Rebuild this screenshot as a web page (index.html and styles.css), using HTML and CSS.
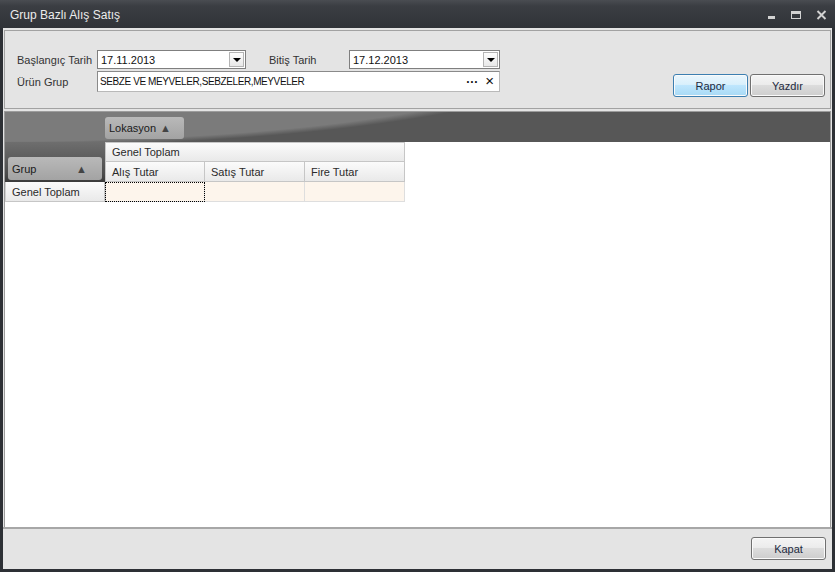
FILE: index.html
```html
<!DOCTYPE html>
<html lang="tr">
<head>
    <meta charset="UTF-8">
    <title>Grup Bazlı Alış Satış</title>
    <link rel="stylesheet" href="styles.css">
</head>
<body>

    <div class="window">

        <div class="titlebar">
            <span class="title">Grup Bazlı Alış Satış</span>
            <div class="controls">
                <svg width="10" height="10" viewBox="0 0 10 10"><rect x="2" y="6" width="7" height="3" fill="#d2d2d2"/></svg>
                <svg width="12" height="10" viewBox="0 0 12 10"><rect x="1.5" y="1.5" width="9" height="7" fill="none" stroke="#d2d2d2"/><rect x="1" y="1" width="10" height="3" fill="#d2d2d2"/></svg>
                <svg width="11" height="10" viewBox="0 0 11 10"><path d="M1.5 1 L9.5 9 M9.5 1 L1.5 9" stroke="#d2d2d2" stroke-width="1.9"/></svg>
            </div>
        </div>

        <div class="client">

            <div class="filter">
                <div class="fields">
                    <label>Başlangıç Tarih</label>
                    <div class="combo"><span>17.11.2013</span><span class="drop"></span></div>
                    <span></span>
                    <label>Bitiş Tarih</label>
                    <div class="combo"><span>17.12.2013</span><span class="drop"></span></div>

                    <label>Ürün Grup</label>
                    <div class="picker">
                        <span class="picker_text">SEBZE VE MEYVELER,SEBZELER,MEYVELER</span>
                        <span class="picker_btns"><span class="dots">···</span><span class="clear">×</span></span>
                    </div>
                </div>
                <div class="actions">
                    <button class="btn btn_blue">Rapor</button>
                    <button class="btn">Yazdır</button>
                </div>
            </div>

            <div class="pivot">
                <div class="band">
                    <div class="field_btn lokasyon">Lokasyon <span class="arrow">▲</span></div>
                </div>
                <div class="pivot_grid">
                    <div class="row_area">
                        <div class="field_btn grup">Grup <span class="arrow">▲</span></div>
                    </div>
                    <div class="hcell span3">Genel Toplam</div>
                    <div class="hcell">Alış Tutar</div>
                    <div class="hcell">Satış Tutar</div>
                    <div class="hcell">Fire Tutar</div>
                    <div class="hcell rowhead">Genel Toplam</div>
                    <div class="dcell focus"></div>
                    <div class="dcell"></div>
                    <div class="dcell"></div>
                </div>
            </div>

            <div class="footer">
                <button class="btn">Kapat</button>
            </div>

        </div>
    </div>

</body>
</html>
```

FILE: styles.css
```css
body{
    margin: 0;
    background-color: #2d3035;
    font-family: "Liberation Sans", Arial, sans-serif;
    font-size: 11px;
    color: #2a2a2a;
}

.window{
    width: 835px;
    height: 572px;
    box-sizing: border-box;
    padding: 0 3px 3px 3px;
    display: flex;
    flex-direction: column;
    background: linear-gradient(#4a4d52 0, #3b3e43 6px, #303338 28px, #2d3035 29px);
}

.titlebar{
    height: 28px;
    display: flex;
    align-items: center;
    justify-content: space-between;
}

.title{
    color: #ececec;
    font-size: 12px;
    margin-left: 7px;
    margin-top: 2px;
}

.controls{
    display: flex;
    gap: 14px;
    margin-right: 5px;
    margin-top: 1px;
}

.client{
    flex: 1;
    background-color: #e4e4e4;
    display: flex;
    flex-direction: column;
}

/* filter panel */

.filter{
    height: 79px;
    box-sizing: border-box;
    margin: 2px 1px 0 1px;
    border: 1px solid #a2a2a2;
    padding: 19px 5px 0 12px;
    display: flex;
    justify-content: space-between;
}

.fields{
    display: grid;
    grid-template-columns: 80px 149px 23px 80px 151px;
    grid-template-rows: 19px 21px;
    row-gap: 2px;
    align-items: center;
}

.fields label{
    color: #333;
}

.combo{
    height: 19px;
    box-sizing: border-box;
    border: 1px solid #7f7f7f;
    background-color: white;
    display: flex;
    align-items: center;
    justify-content: space-between;
    padding-left: 3px;
    color: #111;
}

.drop{
    width: 15px;
    height: 15px;
    margin-right: 1px;
    box-sizing: border-box;
    border: 1px solid #b4b4b4;
    background: linear-gradient(#fdfdfd, #e8e8e8);
    position: relative;
}

.drop::after{
    content: "";
    position: absolute;
    left: 3px;
    top: 5px;
    border-left: 4px solid transparent;
    border-right: 4px solid transparent;
    border-top: 4px solid #000;
}

.picker{
    grid-column: 2 / 6;
    height: 21px;
    box-sizing: border-box;
    border: 1px solid #b9b9b9;
    border-left-color: #8a8a8a;
    border-top-color: #8a8a8a;
    background-color: white;
    display: flex;
    align-items: center;
    justify-content: space-between;
    padding-left: 2px;
    color: #111;
}

.picker_text{
    font-size: 10px;
    letter-spacing: -0.4px;
    margin-top: -1px;
}

.picker_btns{
    display: flex;
    gap: 7px;
    margin-right: 5px;
    align-items: center;
}

.dots{
    font-weight: bold;
    font-size: 12px;
}

.clear{
    font-size: 15px;
    line-height: 12px;
    margin-top: -2px;
}

.actions{
    display: flex;
    gap: 2px;
    margin-top: 24px;
}

.btn{
    width: 75px;
    height: 23px;
    border: 1px solid #707070;
    border-radius: 3px;
    background: linear-gradient(#f4f4f4 0%, #ececec 45%, #dcdcdc 50%, #cdcdcd 100%);
    box-shadow: inset 0 0 0 1px #fafafa;
    font-family: "Liberation Sans", Arial, sans-serif;
    font-size: 11px;
    color: #1d2a40;
    padding: 0;
}

.btn_blue{
    border-color: #3c7fb1;
    background: linear-gradient(#eaf6fd 0%, #d9f0fc 45%, #bee6fd 50%, #a7d9f5 100%);
}

/* pivot grid */

.pivot{
    flex: 1;
    margin: 2px 1px 0 1px;
    border: 1px solid #9c9c9c;
    border-bottom: none;
    background-color: white;
}

.band{
    height: 30px;
    background:
        radial-gradient(580px 94px at 0 -60px, #7b7b7b 95%, #575757 100%);
    background-color: #545454;
    padding-top: 5px;
    padding-left: 100px;
    box-sizing: border-box;
}

.field_btn{
    height: 22px;
    box-sizing: border-box;
    border-radius: 3px;
    background: linear-gradient(#b9b9b9, #a3a3a3);
    color: #1a1a1a;
    display: flex;
    align-items: center;
    padding-left: 4px;
    gap: 4px;
}

.arrow{
    font-size: 11px;
    color: #444;
}

.lokasyon{
    width: 79px;
}

.pivot_grid{
    display: grid;
    grid-template-columns: 100px 100px 100px 100px;
    grid-template-rows: 20px 20px 20px;
}

.row_area{
    grid-row: 1 / 3;
    background: linear-gradient(#6e6e6e, #4c4c4c 80%, #3a3a3a);
    padding: 15px 3px 2px 3px;
}

.grup{
    height: 23px;
    justify-content: space-between;
    padding: 0 15px 0 4px;
}

.hcell{
    border-right: 1px solid #c6c6c6;
    border-bottom: 1px solid #c6c6c6;
    background: linear-gradient(#fbfbfb, #e9e9e9);
    padding-left: 6px;
    display: flex;
    align-items: center;
    color: #2a2a2a;
}

.span3{
    grid-column: 2 / 5;
    border-top: 1px solid #c6c6c6;
    border-left: 1px solid #c6c6c6;
}

.hcell:nth-child(3){
    border-left: 1px solid #c6c6c6;
}

.rowhead{
    padding-left: 6px;
    border-left: 1px solid #d0d0d0;
}

.dcell{
    background-color: #fdf5ec;
    border-right: 1px solid #dedede;
    border-bottom: 1px solid #dedede;
}

.focus{
    outline: 1px dotted #000;
    outline-offset: -1px;
    border-left: 1px solid #c6c6c6;
}

/* footer */

.footer{
    height: 42px;
    box-sizing: border-box;
    border-top: 2px solid #a7a7a7;
    display: flex;
    justify-content: flex-end;
    padding: 8px 6px 0 0;
}
```
